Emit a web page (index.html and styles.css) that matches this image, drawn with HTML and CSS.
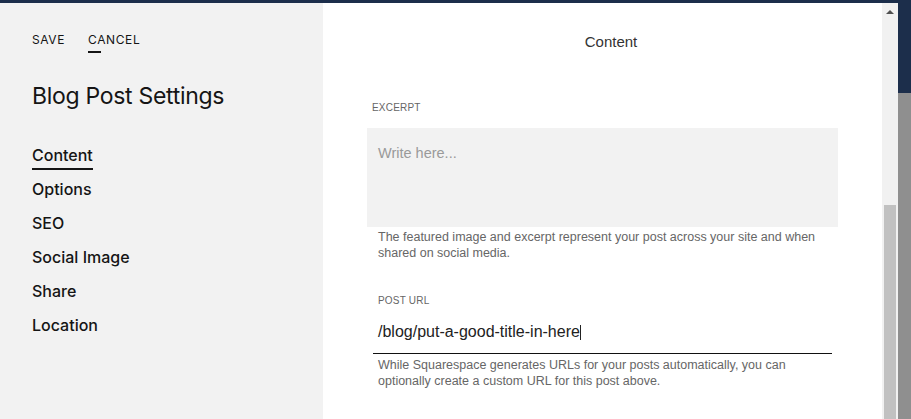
FILE: index.html
```html
<!DOCTYPE html>
<html lang="en">
<head>
<meta charset="utf-8">
<title>Blog Post Settings</title>
<link rel="stylesheet" href="styles.css">
</head>
<body>
<div class="modal">
  <aside class="sidebar">
    <div class="actions">
      <span class="action">SAVE</span>
      <span class="action cancel">CANCEL</span>
    </div>
    <h1 class="title">Blog Post Settings</h1>
    <nav class="nav">
      <a class="nav-item active">Content</a>
      <a class="nav-item">Options</a>
      <a class="nav-item">SEO</a>
      <a class="nav-item">Social Image</a>
      <a class="nav-item">Share</a>
      <a class="nav-item">Location</a>
    </nav>
  </aside>
  <main class="panel">
    <div class="content">
      <h2 class="panel-title">Content</h2>
      <section class="field excerpt">
        <div class="label">EXCERPT</div>
        <div class="textarea">Write here...</div>
        <p class="help">The featured image and excerpt represent your post across your site and when shared on social media.</p>
      </section>
      <section class="field url">
        <div class="label">POST URL</div>
        <div class="input">/blog/put-a-good-title-in-here<span class="caret"></span></div>
        <p class="help">While Squarespace generates URLs for your posts automatically, you can optionally create a custom URL for this post above.</p>
      </section>
    </div>
    <div class="scrollbar">
      <div class="scroll-arrow"></div>
      <div class="scroll-thumb"></div>
    </div>
  </main>
</div>
</body>
</html>
```

FILE: styles.css
```css
html, body {
  margin: 0;
  padding: 0;
}
body {
  width: 911px;
  height: 419px;
  overflow: hidden;
  background: linear-gradient(#1c2e4b 0, #1c2e4b 93px, #8f8f8f 93px, #8f8f8f 100%);
}
.modal {
  margin-top: 3px;
  width: 898px;
  height: 416px;
  display: flex;
  overflow: hidden;
}
.sidebar {
  width: 323px;
  flex: none;
  background: #f2f2f2;
  padding: 29px 0 0 32px;
  box-sizing: border-box;
  font-family: Inter, "Liberation Sans", sans-serif;
  color: #151515;
}
.actions {
  display: flex;
  align-items: flex-start;
  gap: 23px;
}
.action {
  font-size: 12px;
  line-height: 16px;
  letter-spacing: 0.6px;
  font-weight: 400;
}
.cancel::after {
  content: "";
  display: block;
  width: 13px;
  height: 2px;
  background: #151515;
  margin-top: 3px;
}
.title {
  margin: 29px 0 0 0;
  font-size: 23px;
  line-height: 28px;
  font-weight: 400;
  letter-spacing: -0.3px;
}
.nav {
  display: flex;
  flex-direction: column;
  align-items: flex-start;
  gap: 9px;
  margin-top: 35px;
}
.nav-item {
  font-size: 16px;
  line-height: 20px;
  font-weight: 500;
  padding-bottom: 3px;
  border-bottom: 2px solid transparent;
  color: #151515;
}
.nav-item.active {
  border-bottom-color: #151515;
}
.panel {
  flex: 1;
  display: flex;
  background: #fff;
  font-family: "Liberation Sans", Arial, sans-serif;
}
.content {
  flex: 1;
  padding: 29px 0 0 44px;
}
.panel-title {
  margin: 0;
  padding-left: 17px;
  padding-right: 44px;
  text-align: center;
  font-size: 15px;
  line-height: 20px;
  font-weight: 400;
  color: #333;
}
.label {
  font-size: 10px;
  line-height: 12px;
  letter-spacing: 0.2px;
  color: #666;
}
.excerpt {
  margin-top: 50px;
}
.excerpt .label {
  padding-left: 5px;
}
.textarea {
  margin-top: 14px;
  width: 471px;
  height: 99px;
  box-sizing: border-box;
  background: #f2f2f2;
  padding: 15px 11px;
  font-size: 14.5px;
  line-height: 20px;
  color: #9a9a9a;
}
.help {
  margin: 2px 0 0 0;
  width: 460px;
  padding-left: 11px;
  font-size: 12.5px;
  line-height: 16px;
  color: #666;
}
.url {
  margin-top: 34px;
  padding-left: 6px;
}
.url .label {
  padding-left: 5px;
}
.input {
  margin-top: 15px;
  width: 459px;
  box-sizing: border-box;
  padding: 0 0 11px 5px;
  border-bottom: 1px solid #111;
  font-size: 16px;
  line-height: 20px;
  color: #222;
}
.caret {
  display: inline-block;
  width: 1px;
  height: 15px;
  background: #222;
  vertical-align: -3px;
}
.url .help {
  margin-top: 3px;
  width: 454px;
  padding-left: 5px;
}
.scrollbar {
  width: 16px;
  flex: none;
  background: #f1f1f1;
  display: flex;
  flex-direction: column;
  justify-content: space-between;
  align-items: center;
}
.scroll-arrow {
  margin-top: 7px;
  width: 0;
  height: 0;
  border-left: 4px solid transparent;
  border-right: 4px solid transparent;
  border-bottom: 4px solid #505050;
}
.scroll-thumb {
  width: 12px;
  height: 214px;
  background: #c1c1c1;
}
```
